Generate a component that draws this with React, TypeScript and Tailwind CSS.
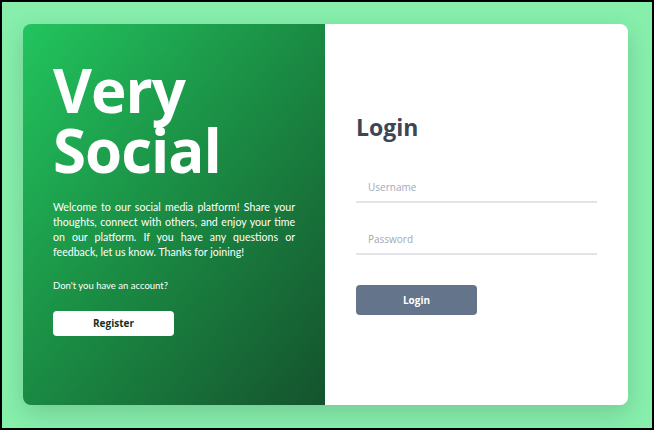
import React from 'react';

const font = { fontFamily: '"Open Sans", "Noto Sans", sans-serif' };
const body = { fontFamily: 'Lato, "Open Sans", sans-serif' };

function Intro() {
  return (
    <div className="w-[302px] shrink-0 rounded-l-lg bg-linear-to-br from-[#22c55e] via-[#1a8a43] to-[#14532d] px-[30px] pt-[36px] text-white">
      <h1 className="text-[60px] font-bold leading-[60px] tracking-[-1px]">
        Very
        <br />
        Social
      </h1>
      <p style={body} className="mt-[20px] text-justify text-[10.6px] leading-[15px]">
        Welcome to our social media platform! Share your thoughts, connect with others, and enjoy your
        time on our platform. If you have any questions or feedback, let us know. Thanks for joining!
      </p>
      <p style={body} className="mt-[20px] text-[9.5px] leading-[12px]">Don't you have an account?</p>
      <button className="mt-[19px] h-[25px] w-[121px] rounded bg-white text-[10px] font-bold text-[#14301f]">
        Register
      </button>
    </div>
  );
}

function LoginForm() {
  return (
    <div className="flex flex-1 flex-col justify-center rounded-r-lg bg-white px-[31px] pb-[2px]">
      <h2 className="text-[23px] font-bold leading-[30px] text-[#3d4656]">Login</h2>
      <div className="mt-[31px] flex flex-col gap-[22px]">
        <input
          placeholder="Username"
          className="h-[30px] border-b-2 border-[#e2e4ea] px-3 text-[10px] text-gray-700 outline-none placeholder:text-[#a3a8b4]"
        />
        <input
          placeholder="Password"
          type="password"
          className="h-[30px] border-b-2 border-[#e2e4ea] px-3 text-[10px] text-gray-700 outline-none placeholder:text-[#a3a8b4]"
        />
      </div>
      <button className="mt-[30px] h-[30px] w-[121px] rounded bg-[#64748b] text-[10px] font-bold text-white">
        Login
      </button>
    </div>
  );
}

export default function App() {
  return (
    <div
      style={font}
      className="flex h-[430px] w-[654px] items-start border-2 border-black bg-[#86efac] pl-[21px] pt-[22px]"
    >
      <div className="flex h-[381px] w-[605px] rounded-lg shadow-[0_8px_24px_rgba(0,0,0,0.15)]">
        <Intro />
        <LoginForm />
      </div>
    </div>
  );
}
